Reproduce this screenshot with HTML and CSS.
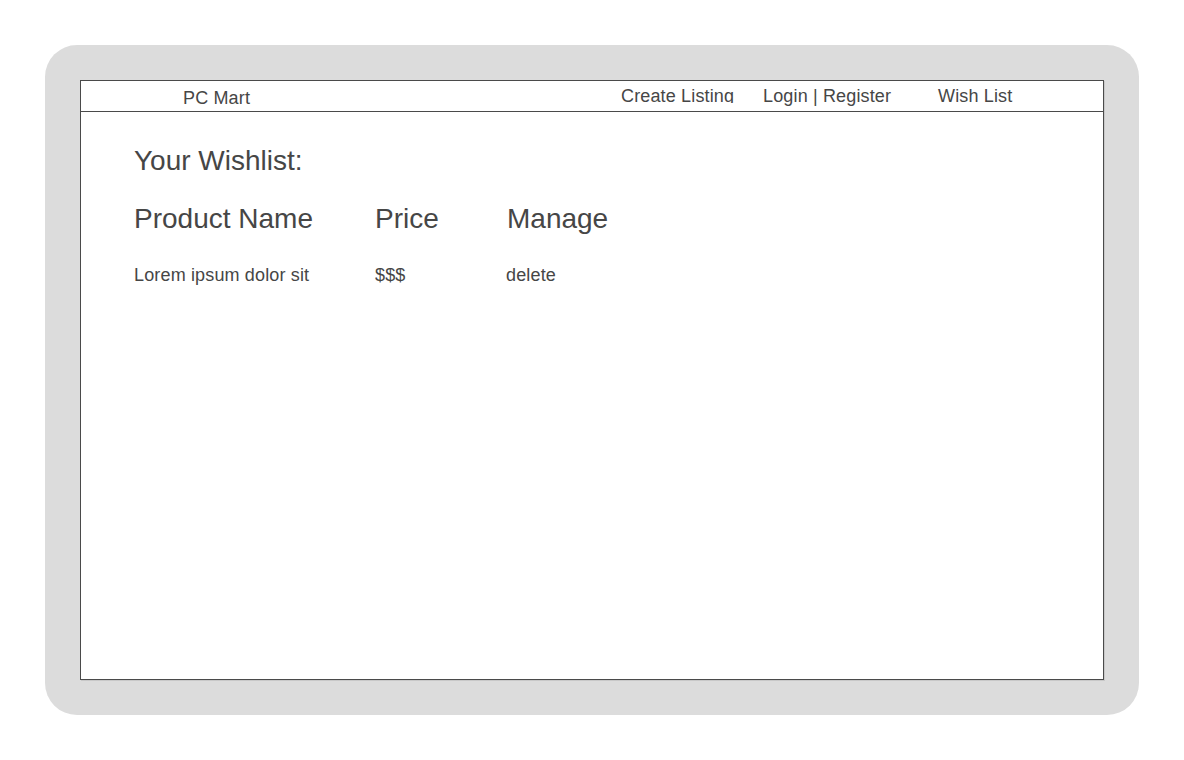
FILE: index.html
```html
<!DOCTYPE html>
<html>
<head>
<meta charset="utf-8">
<link rel="stylesheet" href="styles.css">
</head>
<body>
<div class="device">
  <div class="screen">
    <header class="topbar">
      <div class="brand">PC Mart</div>
      <nav class="nav">
        <span class="nav-item nav-create">Create Listing</span>
        <span class="nav-item nav-login">Login | Register</span>
        <span class="nav-item nav-wish">Wish List</span>
      </nav>
    </header>
    <main class="content">
      <h1 class="title">Your Wishlist:</h1>
      <div class="table">
        <div class="th">Product Name</div>
        <div class="th">Price</div>
        <div class="th">Manage</div>
        <div class="td">Lorem ipsum dolor sit</div>
        <div class="td">$$$</div>
        <div class="td td-manage">delete</div>
      </div>
    </main>
  </div>
</div>
</body>
</html>
```
FILE: styles.css
```css
html, body {
  margin: 0;
  padding: 0;
  background: #ffffff;
}
body {
  font-family: "Liberation Sans", Arial, sans-serif;
  color: #464646;
}
.device {
  margin: 45px 0 0 45px;
  width: 1094px;
  height: 670px;
  box-sizing: border-box;
  padding: 35px;
  background: #dcdcdc;
  border-radius: 32px;
}
.screen {
  width: 1024px;
  height: 600px;
  box-sizing: border-box;
  background: #ffffff;
  border: 1px solid #4a4a4a;
  box-shadow: 1px 1px 0 #c8c8c8;
  display: flex;
  flex-direction: column;
}
.topbar {
  height: 30px;
  border-bottom: 1px solid #4a4a4a;
  display: flex;
  font-size: 18px;
  line-height: 21px;
  letter-spacing: 0.15px;
}
.brand {
  padding: 7px 0 0 102px;
  width: 180px;
}
.nav {
  display: flex;
  align-items: flex-start;
  padding-top: 5px;
  margin-left: 258px;
}
.nav-item {
  display: block;
}
.nav-create {
  width: 142px;
  height: 17px;
  overflow: hidden;
}
.nav-login { width: 175px; }
.content {
  padding: 33px 0 0 53px;
}
.title {
  margin: 0;
  font-size: 28px;
  font-weight: normal;
  line-height: 32px;
}
.table {
  display: grid;
  grid-template-columns: 241px 132px auto;
  margin-top: 26px;
}
.th {
  font-size: 28px;
  line-height: 32px;
}
.td {
  font-size: 18px;
  line-height: 21px;
  letter-spacing: 0.15px;
  margin-top: 30px;
}
.td-manage {
  margin-left: -1px;
}
```
